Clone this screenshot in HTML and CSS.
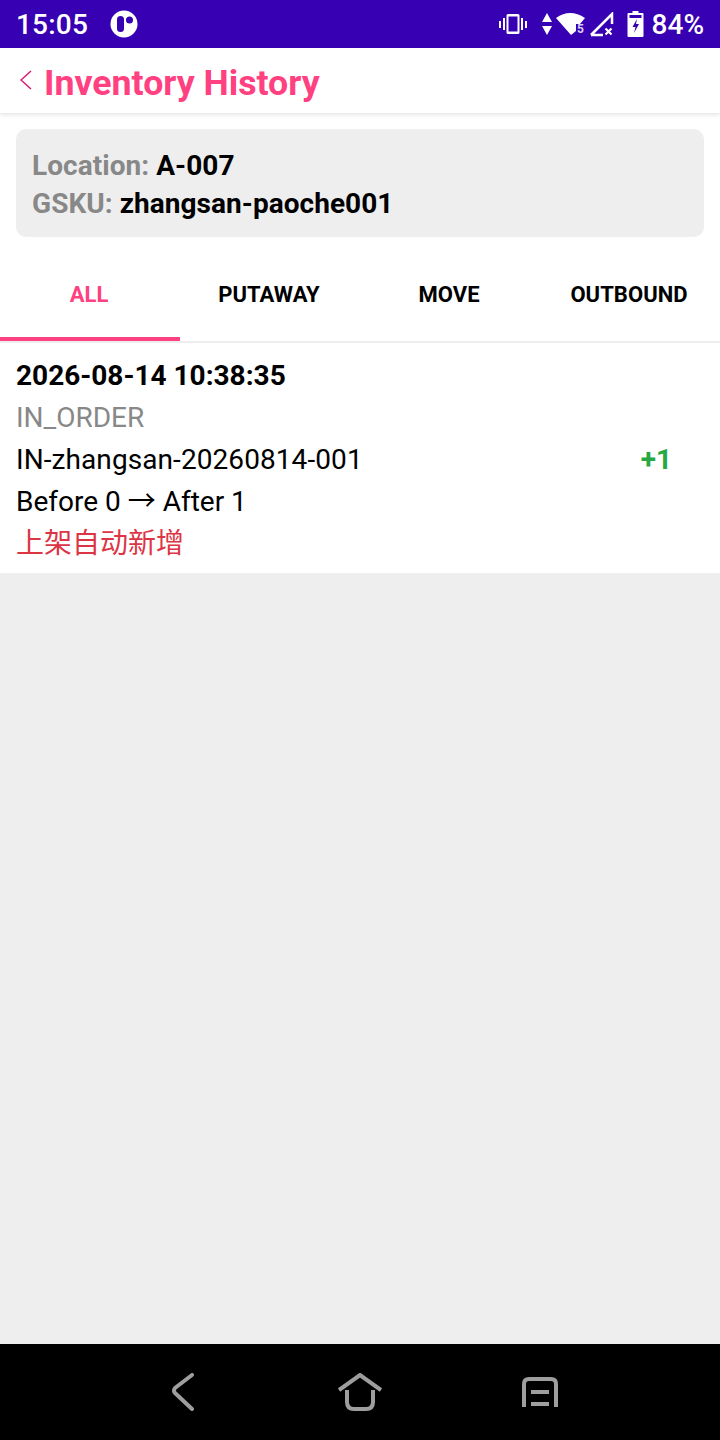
FILE: index.html
```html
<!DOCTYPE html>
<html lang="en">
<head>
  <meta charset="UTF-8">
  <title>Inventory History</title>
  <link rel="stylesheet" href="styles.css">
</head>
<body>
<div class="screen">

  <!-- status bar -->
  <div class="status-bar">
    <div class="status-left">
      <span class="clock">15:05</span>
      <svg class="app-dot" width="28" height="28" viewBox="0 0 28 28">
        <circle cx="14" cy="14" r="13.5" fill="#fff"/>
        <rect x="7" y="6" width="7" height="16" rx="3.5" fill="#3700b3"/>
        <circle cx="19.5" cy="10" r="3.5" fill="#3700b3"/>
      </svg>
    </div>
    <div class="status-right">
      <svg width="28" height="20" viewBox="0 0 28 20" fill="#fff">
        <path d="M0 7h2v7H0zM4 4h2v12H4zM22 4h2v12h-2zM26 7h2v7h-2z"/>
        <path fill-rule="evenodd" d="M9 0h10a1.500 1.500 0 0 1 1.500 1.500v17A1.500 1.500 0 0 1 19 20H9a1.500 1.500 0 0 1-1.500-1.500v-17A1.500 1.500 0 0 1 9 0zm.5 2.500v15h9v-15z"/>
      </svg>
      <svg class="gap-arrows" width="10" height="24" viewBox="0 0 10 24" fill="#fff">
        <path d="M5 1l5 9H0zM0 14h10l-5 9z"/>
      </svg>
      <svg class="gap-wifi" width="30" height="24" viewBox="0 0 30 24" fill="#fff">
        <path d="M0 6Q14-4 29 6L24 12H20V19L15 23z"/>
        <text x="21" y="21" class="wifi-num">5</text>
      </svg>
      <svg class="gap-signal" width="25" height="25" viewBox="0 0 25 25" fill="none" stroke="#fff" stroke-width="2.500">
        <path d="M2 23L23 2V12M2 23H14"/>
        <path d="M16.500 16.500l6 6M22.500 16.500l-6 6" stroke-width="2.200"/>
      </svg>
      <svg class="gap-batt" width="17" height="26" viewBox="0 0 16 26">
        <path fill="#fff" d="M5 0h6v2h4a1 1 0 0 1 1 1v22a1 1 0 0 1-1 1H1a1 1 0 0 1-1-1V3a1 1 0 0 1 1-1h4z"/>
        <path fill="#3700b3" d="M2 4h12v3H2zM9.500 8L5 16h3l-1.500 6L11.500 13H8.500z"/>
      </svg>
      <span class="battery">84%</span>
    </div>
  </div>

  <!-- header -->
  <header class="top-bar">
    <svg class="back" width="12" height="20" viewBox="0 0 12 20" fill="none" stroke="#d81b70" stroke-width="1.500">
      <path d="M11 1L1 10l10 9"/>
    </svg>
    <h1>Inventory History</h1>
  </header>

  <div class="top-panel">
    <!-- location info -->
    <div class="info-card">
      <div><span class="info-key">Location:</span> A-007</div>
      <div><span class="info-key">GSKU:</span> zhangsan-paoche001</div>
    </div>

    <!-- tabs -->
    <div class="tabs">
      <div class="tab active">ALL</div>
      <div class="tab">PUTAWAY</div>
      <div class="tab">MOVE</div>
      <div class="tab">OUTBOUND</div>
    </div>
  </div>

  <!-- records -->
  <div class="record">
    <div class="record-time">2026-08-14 10:38:35</div>
    <div class="record-type">IN_ORDER</div>
    <div class="record-row">
      <span class="record-no">IN-zhangsan-20260814-001</span>
      <span class="record-qty">+1</span>
    </div>
    <div>Before 0 → After 1</div>
    <div class="record-note">上架自动新增</div>
  </div>

  <div class="filler"></div>

  <!-- nav bar -->
  <nav class="nav-bar">
    <svg width="26" height="38" viewBox="0 0 26 38" fill="none" stroke="#9e9e9e" stroke-width="4" stroke-linecap="round" stroke-linejoin="round">
      <path d="M20 2L3 15q-2 3 0 5l17 16"/>
    </svg>
    <svg width="44" height="38" viewBox="0 0 44 38" fill="none" stroke="#9e9e9e" stroke-width="4">
      <path d="M1 17L22 2l21 15"/>
      <path d="M9 17v12q0 7 7 7h12q7 0 7-7V17"/>
    </svg>
    <svg width="36" height="30" viewBox="0 0 36 30" fill="none" stroke="#9e9e9e" stroke-width="4">
      <path d="M2 30V7q0-5 5-5h22q5 0 5 5v23"/>
      <path d="M9 15h18M9 27h18"/>
    </svg>
  </nav>

</div>
</body>
</html>
```

FILE: styles.css
```css
* { box-sizing: border-box; }

body {
  margin: 0;
  font-family: Roboto, "Noto Sans CJK SC", sans-serif;
  color: #000;
}

.screen {
  display: flex;
  flex-direction: column;
  width: 720px;
  height: 1440px;
  background: #eeeeee;
  overflow: hidden;
}

.status-bar {
  display: flex;
  justify-content: space-between;
  align-items: center;
  height: 48px;
  padding: 0 16px;
  background: #3700b3;
  color: #fff;
  flex-shrink: 0;
}

.status-left, .status-right {
  display: flex;
  align-items: center;
}

.clock {
  font-size: 28px;
  font-weight: 500;
  letter-spacing: 0.2px;
}

.app-dot { margin-left: 22px; }

.gap-arrows { margin-left: 15px; }
.gap-wifi { margin-left: 4px; }
.gap-signal { margin-left: 3px; }
.gap-batt { margin-left: 13px; }

.wifi-num {
  font-family: Roboto, sans-serif;
  font-size: 12px;
  font-weight: 700;
  fill: #d8cff0;
}

.battery {
  font-size: 28px;
  font-weight: 500;
  margin-left: 8px;
}

.top-bar {
  position: relative;
  display: flex;
  align-items: center;
  height: 65px;
  padding-left: 20px;
  background: #fff;
  box-shadow: 0 2px 4px rgba(0, 0, 0, 0.1);
  flex-shrink: 0;
}

.back { margin-bottom: 2px; }

.top-bar h1 {
  margin: 4px 0 0 12px;
  font-size: 35.7px;
  font-weight: 700;
  color: #ff4081;
}

.top-panel {
  padding-top: 16px;
  background: #fff;
  flex-shrink: 0;
}

.info-card {
  margin: 0 16px;
  padding: 18px 16px 0;
  height: 108px;
  background: #eeeeee;
  border-radius: 10px;
  font-size: 28px;
  font-weight: 700;
  line-height: 38px;
  letter-spacing: 0.05px;
}

.info-key { color: #888888; }

.tabs {
  display: flex;
  height: 106px;
  padding-top: 15px;
  background: #fff;
  border-bottom: 2px solid #eeeeee;
}

.tab {
  display: flex;
  flex: 1;
  justify-content: center;
  align-items: center;
  padding-right: 2px;
  font-size: 22px;
  font-weight: 700;
  letter-spacing: 0.05px;
  border-bottom: 4px solid transparent;
}

.tab.active {
  color: #ff4081;
  border-bottom-color: #ff4081;
}

.record {
  padding: 12px 16px 8px;
  background: #fff;
  font-size: 28px;
  line-height: 42px;
  flex-shrink: 0;
}

.record-time { font-weight: 700; }
.record-type { color: #888888; }

.record-row {
  display: flex;
  justify-content: space-between;
  padding-right: 32px;
}

.record-no { letter-spacing: 0.08px; }

.record-qty {
  color: #28a745;
  font-weight: 700;
}

.record-note { color: #dc3545; }

.filler { flex: 1; }

.nav-bar {
  display: flex;
  justify-content: center;
  align-items: center;
  gap: 140px;
  height: 96px;
  padding: 0 0 0 9px;
  background: #000;
  flex-shrink: 0;
}
```
